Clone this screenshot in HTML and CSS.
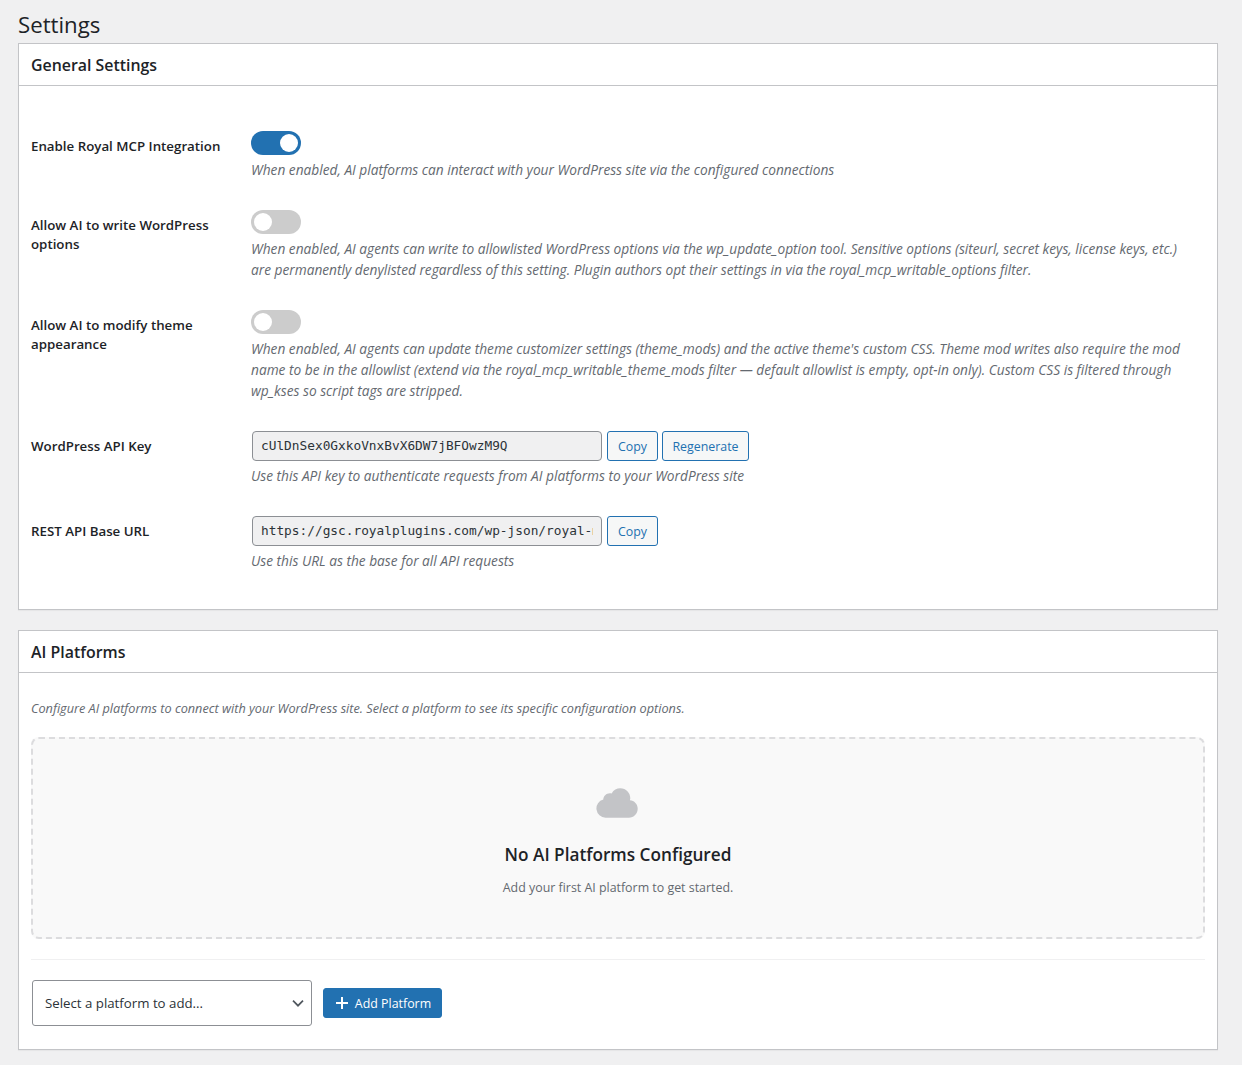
FILE: index.html
```html
<!DOCTYPE html>
<html lang="en">

<head>
    <meta charset="UTF-8">
    <meta name="viewport" content="width=device-width, initial-scale=1.0">
    <title>Settings</title>
    <link rel="stylesheet" href="styles.css">
</head>

<body>
    <div class="wrap">
        <h1>Settings</h1>

        <div class="postbox">
            <h2>General Settings</h2>
            <div class="form">
                <div class="row">
                    <div class="label">Enable Royal MCP Integration</div>
                    <div class="field">
                        <div class="toggle on"></div>
                        <p class="description">When enabled, AI platforms can interact with your WordPress site via the configured connections</p>
                    </div>
                </div>
                <div class="row">
                    <div class="label">Allow AI to write WordPress<br>options</div>
                    <div class="field">
                        <div class="toggle"></div>
                        <p class="description">When enabled, AI agents can write to allowlisted WordPress options via the wp_update_option tool. Sensitive options (siteurl, secret keys, license keys, etc.)<br>are permanently denylisted regardless of this setting. Plugin authors opt their settings in via the royal_mcp_writable_options filter.</p>
                    </div>
                </div>
                <div class="row">
                    <div class="label">Allow AI to modify theme<br>appearance</div>
                    <div class="field">
                        <div class="toggle"></div>
                        <p class="description">When enabled, AI agents can update theme customizer settings (theme_mods) and the active theme's custom CSS. Theme mod writes also require the mod<br>name to be in the allowlist (extend via the royal_mcp_writable_theme_mods filter — default allowlist is empty, opt-in only). Custom CSS is filtered through<br>wp_kses so script tags are stripped.</p>
                    </div>
                </div>
                <div class="row">
                    <div class="label">WordPress API Key</div>
                    <div class="field">
                        <div class="controls">
                            <input type="text" class="code" value="cUlDnSex0GxkoVnxBvX6DW7jBFOwzM9Q" readonly>
                            <button class="button copy">Copy</button>
                            <button class="button regenerate">Regenerate</button>
                        </div>
                        <p class="description">Use this API key to authenticate requests from AI platforms to your WordPress site</p>
                    </div>
                </div>
                <div class="row">
                    <div class="label">REST API Base URL</div>
                    <div class="field">
                        <div class="controls">
                            <input type="text" class="code" value="https://gsc.royalplugins.com/wp-json/royal-mcp/v1/" readonly>
                            <button class="button copy">Copy</button>
                        </div>
                        <p class="description">Use this URL as the base for all API requests</p>
                    </div>
                </div>
            </div>
        </div>

        <div class="postbox">
            <h2>AI Platforms</h2>
            <div class="platforms">
                <p class="description intro">Configure AI platforms to connect with your WordPress site. Select a platform to see its specific configuration options.</p>
                <div class="empty">
                    <svg class="cloud" width="42" height="30" viewBox="0 0 42 30">
                        <path d="M9.500 29.700A9.200 9.200 0 0 1 7.300 11.600C7.300 7.500 11.300 4.300 15.600 5.400C17.600 2 20.800 .3 24.300 .3C30 .3 34.300 4.800 34.300 10.300L33.900 12.300C38.300 12.600 41.700 16.200 41.700 20.800C41.700 25.700 37.800 29.700 32.800 29.700Z" fill="#c3c4c7"/>
                    </svg>
                    <h3>No AI Platforms Configured</h3>
                    <p>Add your first AI platform to get started.</p>
                </div>
                <div class="add-platform">
                    <div class="select">
                        <span>Select a platform to add...</span>
                        <svg width="12" height="8" viewBox="0 0 12 8">
                            <path d="M1 1.700l5 5 5-5" fill="none" stroke="#50575e" stroke-width="1.700"/>
                        </svg>
                    </div>
                    <button class="button primary">
                        <svg width="12" height="12" viewBox="0 0 12 12">
                            <path d="M6 0v12M0 6h12" stroke="#fff" stroke-width="2"/>
                        </svg>
                        <span>Add Platform</span>
                    </button>
                </div>
            </div>
        </div>
    </div>
</body>

</html>
```
FILE: styles.css
```css
* {
    margin: 0;
    padding: 0;
    box-sizing: border-box;
}

body {
    background: #f0f0f1;
    color: #1d2327;
    font-family: "Open Sans", "Noto Sans", sans-serif;
    font-size: 13px;
    white-space: nowrap;
}

.wrap {
    padding: 10px 24px 0 18px;
}

h1 {
    height: 33px;
    font-size: 22.2px;
    font-weight: 400;
    line-height: 30px;
}

.postbox {
    margin-bottom: 20px;
    background: #fff;
    border: 1px solid #c3c4c7;
    box-shadow: 0 1px 1px rgba(0, 0, 0, 0.04);
}

.postbox h2 {
    height: 42px;
    padding: 0 12px;
    border-bottom: 1px solid #c3c4c7;
    font-size: 15.9px;
    font-weight: 600;
    line-height: 42px;
}

.form {
    padding: 30px 12px 23px;
}

.row {
    display: flex;
}

.label {
    width: 220px;
    padding-top: 21px;
    font-size: 13.3px;
    font-weight: 600;
    line-height: 19px;
}

.field {
    padding: 15px 0;
}

.description {
    margin-top: 4px;
    color: #646970;
    font-size: 13.71px;
    font-style: italic;
    line-height: 21px;
}

.toggle {
    width: 50px;
    height: 24px;
    padding: 3px;
    border-radius: 12px;
    background: #ccc;
}

.toggle::before {
    content: "";
    display: block;
    width: 18px;
    height: 18px;
    border-radius: 50%;
    background: #fff;
}

.toggle.on {
    background: #2271b1;
}

.toggle.on::before {
    margin-left: 26px;
}

.controls {
    display: flex;
    gap: 4px;
}

.code {
    width: 350px;
    height: 30px;
    margin: 0 1px;
    padding: 0 8px 2px;
    border: 1px solid #8c8f94;
    border-radius: 4px;
    background: #f0f0f1;
    color: #2c3338;
    font-family: "DejaVu Sans Mono", monospace;
    font-size: 12.8px;
}

.button {
    height: 30px;
    border: 1px solid #2271b1;
    border-radius: 3px;
    background: #f6f7f7;
    color: #2271b1;
    font-family: inherit;
    font-size: 12.4px;
}

.copy {
    width: 51px;
}

.regenerate {
    width: 87px;
}

.platforms {
    padding: 21px 12px 23px;
}

.intro {
    font-size: 12.7px;
}

.empty {
    display: flex;
    flex-direction: column;
    align-items: center;
    height: 202px;
    margin-top: 18px;
    padding-top: 49px;
    border: 2px dashed #dcdcde;
    border-radius: 8px;
    background: #f9f9f9;
}

.cloud {
    margin-right: 2px;
}

.empty h3 {
    margin-top: 24px;
    font-size: 17.2px;
    font-weight: 600;
    line-height: 26px;
}

.empty p {
    margin-top: 10px;
    color: #646970;
    font-size: 12.4px;
    line-height: 20px;
}

.add-platform {
    display: flex;
    align-items: center;
    gap: 11px;
    margin-top: 20px;
    padding: 20px 0 0 1px;
    border-top: 1px solid #f0f0f1;
}

.select {
    display: flex;
    align-items: center;
    justify-content: space-between;
    width: 280px;
    height: 46px;
    padding: 0 7px 0 12px;
    border: 1px solid #8c8f94;
    border-radius: 3px;
    color: #2c3338;
    font-size: 13.25px;
}

.primary {
    display: flex;
    align-items: center;
    justify-content: center;
    gap: 7px;
    width: 119px;
    padding-left: 2px;
    background: #2271b1;
    color: #fff;
}
```
